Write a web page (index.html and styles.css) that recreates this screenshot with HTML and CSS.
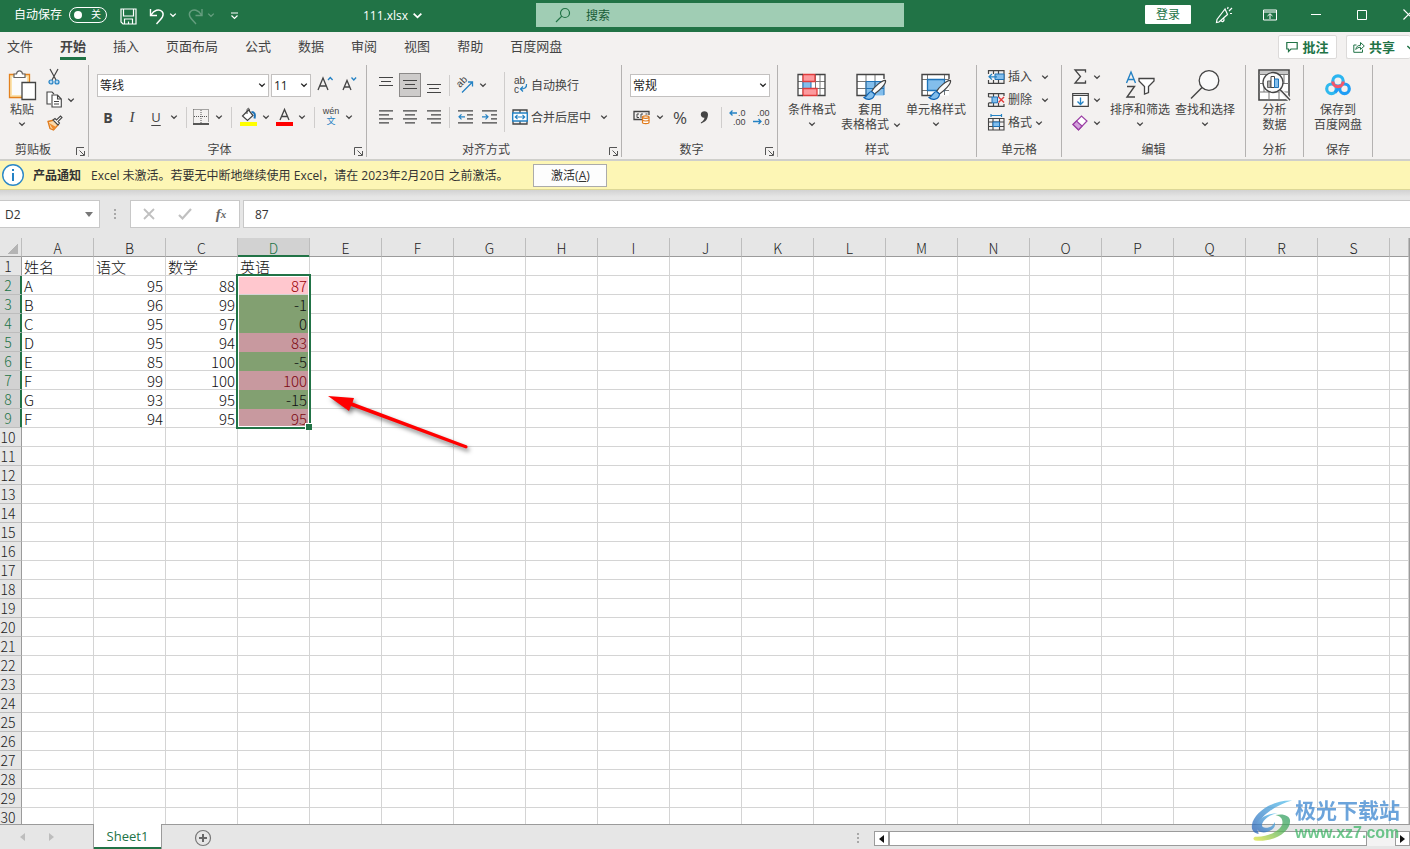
FILE: index.html
```html
<!DOCTYPE html>
<html lang="zh-CN">
<head>
<meta charset="utf-8">
<meta name="viewport" content="width=device-width, initial-scale=1">
<title>111.xlsx - Excel</title>
<link rel="stylesheet" href="styles.css">
</head>
<body>
<svg class="defs" aria-hidden="true">
  <symbol id="chev" viewBox="0 0 8 8"><path d="M1.2 2.6 4 5.3 6.8 2.6" fill="none" stroke="currentColor" stroke-width="1.3"/></symbol>
  <symbol id="launch" viewBox="0 0 9 9"><path d="M.5 8V.5H8M3.5 3.500 8 8M8.500 4V8.500H4" fill="none" stroke="#555"/></symbol>
  <symbol id="brush" viewBox="0 0 24 22"><path d="M22.500 1.500C19 1 11 8 8.500 12.500L11.500 15C16 12 23.500 5 22.500 1.500Z" fill="#fafafa" stroke="#444" stroke-width="1.200"/><path d="M8.500 12.500C5 12.500 5.500 17 1 18.500C4 21.500 11 21 11.500 15Z" fill="#83beec" stroke="#0f64b4" stroke-width="1.200"/></symbol>
</svg>

<header class="titlebar">
  <div class="title-left">
    <label class="autosave" for="autosave">自动保存</label>
    <span class="toggle"><input type="checkbox" id="autosave"><span>关</span></span>
    <button class="tb save" aria-label="保存"><svg width="17" height="17" viewBox="0 0 17 17" fill="none" stroke="#fff" stroke-width="1.200"><path d="M1 1H16V16H3L1 14ZM3.500 1V8H13.500V1M4.500 16V11H12.500V16M8.500 13.500V16"/></svg></button>
    <button class="tb undo" aria-label="撤销"><svg width="17" height="17" viewBox="0 0 17 17" fill="none" stroke="#fff" stroke-width="1.400"><path d="M1.500 1V7.500H8M2 7C5 2 10 .5 13 3.500C16 7 13 10 7.500 16"/></svg></button>
    <button class="tb mini" aria-label="撤销选项"><svg width="8" height="8"><use href="#chev"/></svg></button>
    <button class="tb redo faded" aria-label="恢复"><svg width="17" height="17" viewBox="0 0 17 17" fill="none" stroke="#fff" stroke-width="1.400"><path d="M15 1V7.500H8.500M14.500 7C11.500 2 6.500 .5 3.500 3.500C.5 7 3.500 10 9 16"/></svg></button>
    <button class="tb mini faded" aria-label="恢复选项"><svg width="8" height="8"><use href="#chev"/></svg></button>
    <button class="tb custom" aria-label="自定义快速访问工具栏"><svg width="9" height="8" viewBox="0 0 9 8" fill="none" stroke="#fff" stroke-width="1.200"><path d="M1 1H8M1.500 3.500 4.500 6.500 7.500 3.500"/></svg></button>
    <button class="doc-title">111.xlsx <svg width="11" height="11"><use href="#chev"/></svg></button>
  </div>
  <div class="search">
    <svg width="16" height="16" viewBox="0 0 16 16" fill="none" stroke="#217346" stroke-width="1.200"><circle cx="10" cy="6" r="4.500"/><path d="M6.800 9.200 1 15"/></svg>
    <input type="text" aria-label="搜索" placeholder="搜索">
  </div>
  <div class="title-right">
    <button class="login">登录</button>
    <button class="win" aria-label="即将推出的功能"><svg width="18" height="18" viewBox="0 0 18 18" fill="none" stroke="#fff" stroke-width="1.200"><path d="M10 3 2 13.500 1.500 16.500 4 16 12.500 8.500ZM6 14.500C7 16.500 9.500 15.500 9 12.500M10 3 12.500 8.500M12.500 3 13.200 1M14 5 17 2M15 7.500H17"/></svg></button>
    <button class="win" aria-label="功能区显示选项"><svg width="14" height="12" viewBox="0 0 14 12" fill="none" stroke="#fff"><path d="M.5 1H13.500V11H.5ZM.5 3H13.500M7 10V5M4.500 7 7 4.700 9.500 7"/></svg></button>
    <button class="win" aria-label="最小化"><svg width="10" height="11" viewBox="0 0 10 11"><path d="M0 5.500H10" stroke="#fff"/></svg></button>
    <button class="win" aria-label="最大化"><svg width="10" height="10" viewBox="0 0 10 10"><path d="M.5.5H9.500V9.500H.5Z" fill="none" stroke="#fff"/></svg></button>
    <button class="win last" aria-label="关闭"><svg width="11" height="11" viewBox="0 0 11 11"><path d="M.5.5 10.500 10.500M10.500.5.5 10.500" stroke="#fff" stroke-width="1.200"/></svg></button>
  </div>
</header>

<nav class="tabs">
  <button>文件</button><button class="active">开始</button><button>插入</button><button>页面布局</button><button>公式</button><button>数据</button><button>审阅</button><button>视图</button><button>帮助</button><button>百度网盘</button>
  <div class="tab-actions">
    <button class="pill"><svg width="12" height="12" viewBox="0 0 12 12" fill="none" stroke="#217346" stroke-width="1.200"><path d="M.8 1.500H11.200V8H5L2.500 10.500V8H.8Z"/></svg>批注</button>
    <button class="pill share"><svg width="12" height="12" viewBox="0 0 12 12" fill="none" stroke="#217346"><path d="M3.500 4H.8V11.300H9.500V8.500M2.800 8.500C3.200 5.500 5 4.300 7.500 4.300V1.500L11.300 5 7.500 8.500V6.300C5.500 6.300 4 7 2.800 8.500Z"/></svg>共享<svg class="share-chev" width="9" height="9"><use href="#chev"/></svg></button>
  </div>
</nav>

<section class="ribbon">
  <div class="group g-clip">
    <div class="body">
      <button class="big paste"><span class="pic"><svg width="30" height="32" viewBox="0 0 30 32"><path d="M2.500 5.500H22.500V28.500H2.500Z" fill="#fbe3ad" stroke="#e3811e" stroke-width="1.300"/><path d="M5 8H20V26H5Z" fill="#fbfbfb"/><path d="M7 8.500V5H9.500C10 .8 15 .8 15.500 5H18V8.500Z" fill="#fff" stroke="#666" stroke-width="1.200"/><path d="M15 13.500H28.500V30.500H15Z" fill="#fff" stroke="#444" stroke-width="1.300"/></svg></span><span>粘贴</span><svg class="ch" width="8" height="8"><use href="#chev"/></svg></button>
      <div class="stack">
        <button aria-label="剪切"><svg width="16" height="17" viewBox="0 0 16 17" fill="none" stroke-width="1.200"><path d="M4 1 10 12M12 1 6 12" stroke="#444"/><g stroke="#2482c4" fill="#b9daf2"><circle cx="5" cy="14" r="2"/><circle cx="11" cy="14" r="2"/></g></svg></button>
        <button aria-label="复制"><svg width="16" height="17" viewBox="0 0 16 17" fill="#fff" stroke="#444" stroke-width="1.100"><path d="M5 13H1V1H6L8 3"/><path d="M6 4H11.500L15.300 8V16H6ZM11.500 4V8H15.300M8 10.500H13M8 13H13"/></svg><svg class="far" width="8" height="8"><use href="#chev"/></svg></button>
        <button aria-label="格式刷"><svg width="17" height="16" viewBox="0 0 17 16"><path d="M2 6.500 8 5 12 10 7.500 15 4 13.500Z" fill="#fbd9a9" stroke="#e07a1a" stroke-width="1.300"/><path d="M3 8 10 12 7.500 15Z" fill="#ef8b2c"/><path d="M7 5 9 3.500 10.500 5 14.500 1 16 2.500 12 6.500 13.500 8 12 10Z" fill="#fff" stroke="#444" stroke-width="1.100"/></svg></button>
      </div>
    </div>
    <div class="foot"><span>剪贴板</span><button aria-label="剪贴板设置"><svg width="9" height="9"><use href="#launch"/></svg></button></div>
  </div>

  <div class="group g-font">
    <div class="body rows">
      <div class="row">
        <span class="combo font-name"><select aria-label="字体"><option>等线</option></select><svg width="8" height="8"><use href="#chev"/></svg></span>
        <span class="combo font-size"><select aria-label="字号"><option>11</option></select><svg width="8" height="8"><use href="#chev"/></svg></span>
        <button class="ic" aria-label="增大字号"><svg width="17" height="18" viewBox="0 0 17 18" fill="none"><path d="M1 14 6 2 11 14M2.700 10H9.300" stroke="#444" stroke-width="1.300"/><path d="M11 4 13.300 1.500 15.600 4" stroke="#2482c4" stroke-width="1.300"/></svg></button>
        <button class="ic" aria-label="减小字号"><svg width="17" height="18" viewBox="0 0 17 18" fill="none"><path d="M2 14 6 4.500 10 14M3.300 11H8.700" stroke="#444" stroke-width="1.300"/><path d="M10.500 1.500 12.800 4 15.100 1.500" stroke="#2482c4" stroke-width="1.300"/></svg></button>
      </div>
      <div class="row">
        <button class="ic bold" aria-label="加粗">B</button><button class="ic ital" aria-label="倾斜">I</button><button class="ic under" aria-label="下划线">U</button><button class="dd" aria-label="下划线选项"><svg width="8" height="8"><use href="#chev"/></svg></button>
        <i class="sep near"></i>
        <button class="ic" aria-label="边框"><svg width="16" height="16" viewBox="0 0 16 16"><path d="M.5.5H15.500V13M.5 .5V14M8 1V14M1 7.500H15" fill="none" stroke="#555" stroke-dasharray="1 1"/><path d="M0 15H16" stroke="#222" stroke-width="1.500"/></svg></button><button class="dd" aria-label="边框选项"><svg width="8" height="8"><use href="#chev"/></svg></button>
        <i class="sep wide"></i>
        <button class="ic" aria-label="填充颜色"><svg width="17" height="18" viewBox="0 0 17 18"><path d="M2.500 8 8.500 2 13 7.500 7.500 12.500Z" fill="#fff" stroke="#444" stroke-width="1.200"/><path d="M7 6V2.500C7-.5 10-.5 9.500 3" fill="none" stroke="#444"/><path d="M11.500 4C14.500 4 15.500 6 14.500 10.500" fill="none" stroke="#1e73b8" stroke-width="2"/><path d="M0 14H17V18H0Z" fill="#ff0"/></svg></button><button class="dd" aria-label="填充颜色选项"><svg width="8" height="8"><use href="#chev"/></svg></button>
        <button class="ic" aria-label="字体颜色"><svg width="17" height="18" viewBox="0 0 17 18"><path d="M4 12 8.500 1.500 13 12M5.500 8.500H11.500" fill="none" stroke="#444" stroke-width="1.300"/><path d="M0 14H17V18H0Z" fill="#f00"/></svg></button><button class="dd" aria-label="字体颜色选项"><svg width="8" height="8"><use href="#chev"/></svg></button>
        <i class="sep wide"></i>
        <button class="ic pinyin" aria-label="拼音"><span>wén</span><b>文</b></button><button class="dd" aria-label="拼音选项"><svg width="8" height="8"><use href="#chev"/></svg></button>
      </div>
    </div>
    <div class="foot"><span>字体</span><button aria-label="字体设置"><svg width="9" height="9"><use href="#launch"/></svg></button></div>
  </div>

  <div class="group g-align">
    <div class="body">
      <div class="rows">
        <div class="row">
          <button class="ic" aria-label="顶端对齐"><svg width="14" height="18" viewBox="0 0 14 18" stroke="#444" stroke-width="1.200"><path d="M0 1.500H14M2 5.500H12M0 9.500H14"/></svg></button><button class="ic on" aria-label="垂直居中"><svg width="14" height="18" viewBox="0 0 14 18" stroke="#444" stroke-width="1.200"><path d="M0 4.500H14M2 8.500H12M0 12.500H14"/></svg></button><button class="ic" aria-label="底端对齐"><svg width="14" height="18" viewBox="0 0 14 18" stroke="#444" stroke-width="1.200"><path d="M0 8.500H14M2 12.500H12M0 16.500H14"/></svg></button>
          <i class="sep"></i>
          <button class="ic" aria-label="方向"><svg width="18" height="18" viewBox="0 0 18 18" fill="none"><text class="glyph" x="4" y="12" transform="rotate(-45 4 12)">ab</text><path d="M6 16.500 16.500 6M12 6H16.500V10.500" stroke="#2482c4" stroke-width="1.300"/></svg></button><button class="dd" aria-label="方向选项"><svg width="8" height="8"><use href="#chev"/></svg></button>
        </div>
        <div class="row">
          <button class="ic" aria-label="左对齐"><svg width="14" height="14" viewBox="0 0 14 14" stroke="#444" stroke-width="1.200"><path d="M0 .8H14M0 4.800H10M0 8.800H14M0 12.800H10"/></svg></button><button class="ic" aria-label="居中"><svg width="14" height="14" viewBox="0 0 14 14" stroke="#444" stroke-width="1.200"><path d="M0 .8H14M2 4.800H12M0 8.800H14M2 12.800H12"/></svg></button><button class="ic" aria-label="右对齐"><svg width="14" height="14" viewBox="0 0 14 14" stroke="#444" stroke-width="1.200"><path d="M0 .8H14M4 4.800H14M0 8.800H14M4 12.800H14"/></svg></button>
          <i class="sep"></i>
          <button class="ic" aria-label="减少缩进"><svg width="15" height="14" viewBox="0 0 15 14" fill="none" stroke="#444" stroke-width="1.200"><path d="M0 .8H15M9 4.800H15M9 8.800H15M0 12.800H15"/><path d="M7 6.800H1M3.500 4.300 1 6.800 3.500 9.300" stroke="#2482c4"/></svg></button><button class="ic" aria-label="增加缩进"><svg width="15" height="14" viewBox="0 0 15 14" fill="none" stroke="#444" stroke-width="1.200"><path d="M0 .8H15M9 4.800H15M9 8.800H15M0 12.800H15"/><path d="M0 6.800H6M3.500 4.300 6 6.800 3.500 9.300" stroke="#2482c4"/></svg></button>
        </div>
      </div>
      <i class="sep tall"></i>
      <div class="rows wrap-rows">
        <div class="row"><button class="txt"><svg width="16" height="18" viewBox="0 0 16 18" fill="none"><text class="glyph" x="2" y="8">ab</text><text class="glyph" x="2" y="17">c</text><path d="M14.500 8C15 12 12 13 8.500 13M11 10.500 8.500 13 11 15.500" stroke="#2482c4" stroke-width="1.300"/></svg>自动换行</button></div>
        <div class="row"><button class="txt"><svg width="16" height="16" viewBox="0 0 16 16" fill="none"><path d="M1 1H15V15H1ZM8 1V4M8 12V15" stroke="#444" stroke-width="1.300"/><path d="M.7 4H15.300V12H.7Z" fill="#fff" stroke="#2482c4" stroke-width="1.400"/><path d="M3 8H13M5.500 5.800 3.300 8 5.500 10.200M10.500 5.800 12.700 8 10.500 10.200" stroke="#2482c4" stroke-width="1.200"/></svg>合并后居中</button><button class="dd merge-dd" aria-label="合并选项"><svg width="8" height="8"><use href="#chev"/></svg></button></div>
      </div>
    </div>
    <div class="foot"><span>对齐方式</span><button aria-label="对齐设置"><svg width="9" height="9"><use href="#launch"/></svg></button></div>
  </div>

  <div class="group g-num">
    <div class="body rows">
      <div class="row"><span class="combo num-format"><select aria-label="数字格式"><option>常规</option></select><svg width="8" height="8"><use href="#chev"/></svg></span></div>
      <div class="row">
        <button class="ic" aria-label="会计数字格式"><svg width="18" height="16" viewBox="0 0 18 16" fill="none"><path d="M9 10.500H1V2.500H16V6" stroke="#444" stroke-width="1.300"/><path d="M6 5H4V8.500H6M8 9V5H10M12.500 5H14.500" stroke="#444"/><path d="M9.500 8C9.500 6.500 16 6.500 16 8V13.500C16 15 9.500 15 9.500 13.500Z" fill="#fff" stroke="#e07a1a" stroke-width="1.200"/><path d="M9.500 8.300C10.500 9.600 15 9.600 16 8.300M9.500 11C10.500 12.300 15 12.300 16 11" stroke="#e07a1a" stroke-width="1.200"/></svg></button><button class="dd" aria-label="货币选项"><svg width="8" height="8"><use href="#chev"/></svg></button>
        <button class="ic pct" aria-label="百分比样式">%</button><button class="ic" aria-label="千位分隔样式"><svg width="9" height="14" viewBox="0 0 9 14"><path d="M8 4.500C8 9 5.500 12 1 13.500L.8 12.500C3 11.500 4.300 9.500 4.500 7.800 2.500 8.200 .8 6.500 .8 4.500 .8 .2 8 .2 8 4.500Z" fill="#444"/></svg></button>
        <i class="sep"></i>
        <button class="ic" aria-label="增加小数位数"><svg width="17" height="18" viewBox="0 0 17 18"><text class="glyph digits" x="9" y="8">.0</text><text class="glyph digits" x="4" y="17">.00</text><path d="M8 5H1M3.500 2.500 1 5 3.500 7.500" fill="none" stroke="#2482c4" stroke-width="1.300"/></svg></button><button class="ic" aria-label="减少小数位数"><svg width="17" height="18" viewBox="0 0 17 18"><text class="glyph digits" x="4" y="8">.00</text><text class="glyph digits" x="9" y="17">.0</text><path d="M0 13.500H8M5.500 11 8 13.500 5.500 16" fill="none" stroke="#2482c4" stroke-width="1.300"/></svg></button>
      </div>
    </div>
    <div class="foot"><span>数字</span><button aria-label="数字设置"><svg width="9" height="9"><use href="#launch"/></svg></button></div>
  </div>

  <div class="group g-style">
    <div class="body bigs">
      <button class="big"><span class="pic"><svg width="29" height="24" viewBox="0 0 29 24"><path d="M1 1.500H28V22.500H1Z" fill="#fff"/><path d="M1 8.500H28M1 15.500H28M6 1V22M18.500 1V22M23 1V22" stroke="#777"/><path d="M6 8.500H14V15.500H6Z" fill="#83beec" stroke="#1e73b8"/><path d="M6 1.500H18V8.500H6ZM6 15.500H20V22.500H6Z" fill="#fc9a9e" stroke="#e03c3c" stroke-width="1.300"/><path d="M6 1.500H1V22.500H6M18.500 1.500H28V22.500H20.500" fill="none" stroke="#444" stroke-width="1.300"/></svg></span><span>条件格式</span><svg class="ch" width="8" height="8"><use href="#chev"/></svg></button>
      <button class="big"><span class="pic"><svg width="32" height="30" viewBox="0 0 32 30"><path d="M2 4.500H29V25.500H2Z" fill="#fff"/><path d="M11 11.500H29V25.500H11Z" fill="#83beec"/><path d="M2 11.500H29M2 18.500H29M11 4V25M20 4V25" stroke="#777"/><path d="M11 25V11.500H29V25M11 18.500H29M20 11.500V25" fill="none" stroke="#1e73b8"/><path d="M12 25.500H2V4.500H29V9" fill="none" stroke="#444" stroke-width="1.400"/><use href="#brush" x="8" y="9" width="24" height="22"/></svg></span><span>套用</span><span class="with-ch">表格格式<svg width="8" height="8"><use href="#chev"/></svg></span></button>
      <button class="big"><span class="pic"><svg width="32" height="30" viewBox="0 0 32 30"><path d="M2 4.500H29V25.500H2Z" fill="#fff"/><path d="M7.500 4V25M2 9.500H29M2 20.500H29M24.500 4V25" stroke="#777"/><path d="M7.500 9.500H24.500V20.500H7.500Z" fill="#83beec" stroke="#1e73b8" stroke-width="1.300"/><path d="M12 25.500H2V4.500H29V9" fill="none" stroke="#444" stroke-width="1.400"/><use href="#brush" x="8" y="9" width="24" height="22"/></svg></span><span>单元格样式</span><svg class="ch" width="8" height="8"><use href="#chev"/></svg></button>
    </div>
    <div class="foot"><span>样式</span></div>
  </div>

  <div class="group g-cells">
    <div class="body stack">
      <button><svg width="17" height="14" viewBox="0 0 17 14" fill="none"><path d="M.5 4V.7H16V13.300H.5V10M5.500 .7V4M10.500 .7V13M5.500 10V13" stroke="#444" stroke-width="1.200"/><path d="M7 4H16V9.500H7Z" fill="#83beec" stroke="#1e73b8"/><path d="M9 6.800H1M4 4 1 6.800 4 9.600" stroke="#2482c4" stroke-width="1.200"/></svg>插入<svg class="far" width="8" height="8"><use href="#chev"/></svg></button>
      <button><svg width="17" height="14" viewBox="0 0 17 14" fill="none"><path d="M.5 4V.7H16V3M.5 10V13.300H16V11M5.500 .7V4M10.500 .7V4M5.500 10V13M10.500 10V13M.5 4H4M.5 9.800H4" stroke="#444" stroke-width="1.200"/><path d="M4 4H9.500V9.800H4Z" fill="#83beec" stroke="#1e73b8"/><path d="M10.500 4 16 9.500M16 4 10.500 9.500" stroke="#e23a3a" stroke-width="1.400"/></svg>删除<svg class="far" width="8" height="8"><use href="#chev"/></svg></button>
      <button><svg width="17" height="17" viewBox="0 0 17 17" fill="none"><path d="M.5 4.500H16V16H.5ZM.5 8H16M.5 12.500H16M5 4.500V16M11.500 4.500V16" stroke="#444" stroke-width="1.100"/><path d="M5 8H11.500V12.500H5Z" fill="#83beec" stroke="#1e73b8"/><path d="M3 1.500H13.500M3 0V3M13.500 0V3" stroke="#2482c4" stroke-width="1.200"/></svg>格式<svg width="8" height="8"><use href="#chev"/></svg></button>
    </div>
    <div class="foot"><span>单元格</span></div>
  </div>

  <div class="group g-edit">
    <div class="body">
      <div class="stack">
        <button aria-label="自动求和"><svg width="17" height="15" viewBox="0 0 17 15"><path d="M13.500 3.500V1H3L8.500 7.500 3 14H13.500V11.500" fill="none" stroke="#444" stroke-width="1.300"/></svg><svg width="8" height="8"><use href="#chev"/></svg></button>
        <button aria-label="填充"><svg width="17" height="14" viewBox="0 0 17 14" fill="none"><path d="M.7 .7H16.300V13.300H.7Z" fill="#fff" stroke="#444" stroke-width="1.200"/><path d="M.7 2.500H16.300" stroke="#444"/><path d="M8.500 4.500V11.500M5.500 8.500 8.500 11.500 11.500 8.500" stroke="#2482c4" stroke-width="1.300"/></svg><svg width="8" height="8"><use href="#chev"/></svg></button>
        <button aria-label="清除"><svg width="17" height="16" viewBox="0 0 17 16"><path d="M1 9.500 9.500 1 15 6 6.500 14.800Z" fill="#fff" stroke="#9b3fa5" stroke-width="1.200"/><path d="M1 9.500 4.500 6 10 11 6.500 14.800Z" fill="#d3a0dc" stroke="#9b3fa5" stroke-width="1.200"/></svg><svg width="8" height="8"><use href="#chev"/></svg></button>
      </div>
      <div class="bigs">
        <button class="big"><span class="pic"><svg width="30" height="28" viewBox="0 0 30 28" fill="none"><path d="M1.500 12 6 1 10.500 12M3 8.500H9" stroke="#2482c4" stroke-width="1.400"/><path d="M2 15.500H9.500L2 26H10" stroke="#444" stroke-width="1.400"/><path d="M14 7.500H29V10L23.500 15.500V21.500L19.500 23V15.500L14 10Z" fill="#fff" stroke="#444" stroke-width="1.300"/></svg></span><span>排序和筛选</span><svg class="ch" width="8" height="8"><use href="#chev"/></svg></button>
        <button class="big"><span class="pic"><svg width="30" height="30" viewBox="0 0 30 30"><circle cx="19" cy="10.500" r="9.800" fill="#fafafa" stroke="#444" stroke-width="1.300"/><path d="M12 17.500 1 28.500" stroke="#444" stroke-width="1.400"/></svg></span><span>查找和选择</span><svg class="ch" width="8" height="8"><use href="#chev"/></svg></button>
      </div>
    </div>
    <div class="foot"><span>编辑</span></div>
  </div>

  <div class="group g-analyze">
    <div class="body bigs">
      <button class="big"><span class="pic"><svg width="33" height="32" viewBox="0 0 33 32" fill="none"><path d="M1 1H31V31H1Z" fill="#fff" stroke="#444" stroke-width="1.600"/><path d="M2 2H30V5H2Z" fill="#c8c8c8"/><path d="M1 5.500H31M1 14.500H31M1 23H31M11 23V31M21 23V31M6 14V23M26 5V14" stroke="#777"/><circle cx="15" cy="13.500" r="10" fill="#fafafa" stroke="#444" stroke-width="1.300"/><path d="M9.500 12H13V18.500H9.500Z" fill="#aaa" stroke="#666"/><path d="M13 7.500H16.500V18.500H13Z" fill="#fff" stroke="#444"/><path d="M16.500 10H20.500V18.500H16.500Z" fill="#83beec" stroke="#1e73b8"/><path d="M23 22 32 31" stroke="#f3f1f0" stroke-width="4"/><path d="M22 20.500 32 31" stroke="#444" stroke-width="1.400"/></svg></span><span>分析</span><span>数据</span></button>
    </div>
    <div class="foot"><span>分析</span></div>
  </div>

  <div class="group g-save">
    <div class="body bigs">
      <button class="big"><span class="pic"><svg width="28" height="22" viewBox="0 0 28 22" fill="none" stroke-width="3.200"><circle cx="7.500" cy="14.800" r="4.800" stroke="#2fb9ee"/><circle cx="20.500" cy="14.800" r="4.800" stroke="#1f9df5"/><path d="M11 18.500 17 11.500" stroke="#1f9df5"/><circle cx="14" cy="7" r="5.200" stroke="#2bb5f0"/><path d="M8.800 7.500A5.200 5.200 0 0 0 19.200 7.500" stroke="#f5566b"/></svg></span><span>保存到</span><span>百度网盘</span></button>
    </div>
    <div class="foot"><span>保存</span></div>
  </div>
</section>

<section class="notice">
  <svg width="24" height="24" viewBox="0 0 24 24"><circle cx="12" cy="12" r="10.300" fill="#fff" stroke="#2b88c8" stroke-width="1.400"/><path d="M12 6V8M12 10V18" stroke="#2482c4" stroke-width="2"/></svg>
  <strong>产品通知</strong>
  <p>Excel 未激活。若要无中断地继续使用 Excel，请在 2023年2月20日 之前激活。</p>
  <button>激活(<u>A</u>)</button>
</section>

<section class="formula">
  <div class="namebox"><input type="text" aria-label="名称框" value="D2"><svg width="8" height="5" viewBox="0 0 8 5"><path d="M0 0H8L4 5Z" fill="#777"/></svg></div>
  <span class="dots"></span>
  <div class="fx">
    <button aria-label="取消"><svg width="12" height="12" viewBox="0 0 12 12"><path d="M1 1 11 11M11 1 1 11" stroke="#c0c0c0" stroke-width="1.800"/></svg></button>
    <button aria-label="输入"><svg width="14" height="12" viewBox="0 0 14 12"><path d="M1 7 4.500 10.500 13 1" fill="none" stroke="#c0c0c0" stroke-width="2.200"/></svg></button>
    <button class="fn" aria-label="插入函数">f<sub>x</sub></button>
  </div>
  <input class="fbar" type="text" aria-label="编辑栏" value="87">
</section>

<main class="sheet">
  <table id="grid"></table>
  <div class="selection"></div>
  <svg class="arrow" width="150" height="64" viewBox="0 0 150 64"><path d="M3 6 29 8 27.500 12.500 142 55.500Q143.500 58 141 58.500L26 16 24 21Z" fill="#f00"/></svg>
</main>

<footer class="bottom">
  <div class="nav-arrows">
    <button aria-label="上一张工作表"><svg width="5" height="8" viewBox="0 0 5 8"><path d="M5 0V8L0 4Z" fill="#bdbdbd"/></svg></button>
    <button aria-label="下一张工作表"><svg width="5" height="8" viewBox="0 0 5 8"><path d="M0 0V8L5 4Z" fill="#bdbdbd"/></svg></button>
  </div>
  <button class="sheet-tab">Sheet1</button>
  <button class="add" aria-label="新工作表"><svg width="18" height="18" viewBox="0 0 18 18"><circle cx="9" cy="9" r="7.500" fill="none" stroke="#777" stroke-width="1.200"/><path d="M9 5V13M5 9H13" stroke="#666" stroke-width="2"/></svg></button>
  <span class="dots"></span>
  <div class="scroll">
    <button aria-label="向左滚动"><svg width="5" height="8" viewBox="0 0 5 8"><path d="M5 0V8L0 4Z" fill="#111"/></svg></button>
    <span class="thumb"></span>
    <span class="track"></span>
    <button aria-label="向右滚动"><svg width="5" height="8" viewBox="0 0 5 8"><path d="M0 0V8L5 4Z" fill="#111"/></svg></button>
  </div>
</footer>

<div class="watermark">
  <svg width="45" height="44" viewBox="0 0 46 44">
    <defs><linearGradient id="wb" x1="0" y1="1" x2="1" y2="0"><stop offset="0" stop-color="#2a62b8"/><stop offset="1" stop-color="#58c4ee"/></linearGradient><linearGradient id="wg" x1="0" y1="1" x2="1" y2="0"><stop offset="0" stop-color="#e5e63c"/><stop offset=".6" stop-color="#4fb05a"/><stop offset="1" stop-color="#2f9c6a"/></linearGradient></defs>
    <path d="M43 2C24 1 4 14 2 27 1 33 5 36 9 36 5 29 10 20 20 13 27 8 35 4 43 2Z" fill="url(#wb)"/>
    <path d="M28 15C18 15 7 21 6 28 6 34 13 36 18 34 24 32 27 28 25 24 24 28 20 30 16 30 12 30 11 27 14 23 17 19 22 16 28 15Z" fill="url(#wb)"/>
    <path d="M26 17C33 15 41 17 41 23 41 34 25 45 5 43 3 42 3 40 5 39 18 40 31 33 33 26 34 21 31 18 26 17Z" fill="url(#wg)"/>
  </svg>
  <div><b>极光下载站</b><span>www.xz7.com</span></div>
</div>
<script src="grid.js"></script>
</body>
</html>
```

FILE: styles.css
```css
* { box-sizing: border-box; }
body {
  margin: 0;
  height: 100vh;
  display: flex;
  flex-direction: column;
  overflow: hidden;
  position: relative;
  background: #e6e6e6;
  color: #444;
  font: 12px/15px "Open Sans", "Noto Sans CJK SC", sans-serif;
}
button, input, select { font: inherit; color: inherit; margin: 0; }
button {
  display: flex;
  align-items: center;
  justify-content: center;
  padding: 0;
  border: 0;
  background: none;
  white-space: nowrap;
}
svg { display: block; flex: none; overflow: visible; }
.defs { position: absolute; width: 0; height: 0; }
.glyph { font: 10px "Liberation Sans", sans-serif; fill: #444; }
.digits { font-size: 9px; }

/* title bar */
.titlebar {
  flex: none;
  height: 32px;
  display: grid;
  grid-template-columns: 536fr 368fr 506fr;
  background: #217346;
  color: #fff;
}
.title-left { display: flex; align-items: center; padding: 0 113px 3px 14px; }
.toggle { display: grid; align-items: center; margin-left: 7px; }
.toggle > * { grid-area: 1 / 1; }
.toggle input {
  appearance: none;
  display: flex;
  align-items: center;
  width: 38px;
  height: 16px;
  padding-left: 4px;
  border: 1px solid #fff;
  border-radius: 8px;
}
.toggle input::before { content: ""; width: 8px; height: 8px; border-radius: 50%; background: #fff; }
.toggle span { justify-self: end; padding-right: 6px; font-size: 10px; pointer-events: none; }
.save { margin: 3px 0 0 13px; }
.undo { margin: 3px 0 0 12px; }
.redo { margin: 3px 0 0 10px; }
.mini { margin-left: 3px; }
.faded { opacity: .3; }
.custom { margin: 3px 0 0 15px; }
.doc-title { margin: 2px 0 0 auto; gap: 4px; }
.search {
  display: flex;
  align-items: center;
  align-self: start;
  height: 24px;
  margin-top: 3px;
  padding-left: 19px;
  gap: 15px;
  background: #a0cdb4;
}
.search input { flex: 1; min-width: 0; padding: 0; border: 0; outline: 0; background: none; }
.search input::placeholder { color: #185c37; opacity: 1; }
.title-right { display: flex; align-items: center; justify-content: flex-end; padding-bottom: 3px; overflow: hidden; }
.login { width: 46px; height: 19px; margin-right: 10px; background: #fff; color: #217346; border-radius: 1px; }
.win { width: 46px; height: 28px; flex: none; }
.win.last { margin-right: -21px; }

/* ribbon tabs */
.tabs {
  flex: none;
  height: 30px;
  display: flex;
  gap: 27px;
  padding-left: 7px;
  background: #f3f1f0;
  font-size: 13px;
}
.tabs > button { height: 28px; }
.tabs > .active { font-weight: bold; background: linear-gradient(#217346, #217346) 0 25px / 100% 3px no-repeat; }
.tab-actions { display: flex; gap: 9px; margin-left: auto; padding-top: 3px; }
.pill {
  width: 59px;
  height: 24px;
  gap: 4px;
  border: 1px solid #dcdad9;
  border-radius: 2px;
  background: #fff;
  color: #217346;
  font-weight: bold;
}
.share { width: 64px; padding-left: 6px; justify-content: flex-start; border-right: 0; overflow: hidden; }
.share-chev { margin-left: 7px; }

/* ribbon */
.ribbon {
  flex: none;
  display: flex;
  padding: 3px 0 2px;
  background: #f3f1f0;
  border-bottom: 2px solid #cfcfcb;
}
.group { flex: none; display: flex; flex-direction: column; height: 92px; border-right: 1px solid #b4b2b1; }
.g-clip { width: 89px; }
.g-font { width: 278px; }
.g-align { width: 255px; }
.g-num { width: 156px; }
.g-style { width: 199px; }
.g-cells { width: 85px; }
.g-edit { width: 184px; }
.g-analyze { width: 58px; }
.g-save { width: 69px; }
.body { flex: 1; display: flex; }
.foot { display: flex; height: 15px; align-items: center; }
.foot span { flex: 1; text-align: center; }
.foot button { width: 16px; padding-top: 4px; }
.g-clip .foot span { padding-right: 6px; }

.big { flex-direction: column; align-self: flex-start; }
.big > span { height: 15px; }
.big > .pic { display: flex; align-items: center; justify-content: center; height: 34px; margin-top: 3px; }
.big .ch { margin-top: 3px; }
.with-ch { display: flex; align-items: center; gap: 4px; }
.bigs { display: flex; justify-content: center; gap: 5px; }
.g-style .big:nth-child(2) > span:nth-child(2) { padding-right: 2px; }

.stack { display: flex; flex-direction: column; }
.stack button { height: 23px; gap: 3px; justify-content: flex-start; }
.stack .far { margin-left: 6px; }
.paste { width: 30px; margin-left: 7px; }
.g-clip .stack { margin-left: 9px; }
.g-clip .stack .far { margin-left: 2px; }
.g-cells .stack { padding-left: 11px; }
.g-edit .stack { padding-left: 10px; width: 48px; }
.g-edit .stack button { gap: 4px; }

.rows { display: flex; flex-direction: column; gap: 8px; padding-top: 8px; }
.g-font .rows { padding-left: 7px; }
.g-num .rows { padding-left: 8px; }
.g-align .body { padding-left: 7px; }
.row { display: flex; align-items: center; height: 24px; }
.ic { width: 24px; height: 24px; flex: none; }
.on { width: 22px; margin: 0 1px; background: #cdcbca; border: 1px solid #8c8a89; }
.dd { width: 12px; height: 24px; flex: none; }
.sep { flex: none; width: 1px; height: 21px; margin: 0 3px; background: #cfcdcc; }
.sep.near { margin: 0 2px 0 6px; }
.sep.wide { margin: 0 4px 0 6px; }
.sep.tall { height: 60px; margin-top: 7px; }
.combo { display: grid; align-items: center; height: 23px; background: #fff; border: 1px solid #c3c1c0; color: #222; }
.combo > * { grid-area: 1 / 1; }
.combo select { appearance: none; width: 100%; height: 21px; padding: 0 2px; border: 0; background: none; }
.combo svg { justify-self: end; margin-right: 2px; pointer-events: none; }
.font-name { width: 172px; margin-left: 1px; }
.font-size { width: 40px; margin: 0 2px; }
.num-format { width: 140px; }
.bold { font-size: 14px; font-weight: bold; }
.ital { font: italic 15px "Liberation Serif", serif; }
.under { font-size: 13px; text-decoration: underline; text-underline-offset: 3px; }
.pinyin { flex-direction: column; font: 9px/9px "Liberation Sans", "Noto Sans CJK SC", sans-serif; }
.pinyin b { font-weight: normal; color: #2482c4; line-height: 11px; }
.pct { font-size: 17px; margin-left: 2px; }
.pct + .ic { margin-right: 2px; }
.wrap-rows { padding-left: 4px; }
.txt { gap: 3px; }
.merge-dd { margin-left: 7px; }

/* activation notice */
.notice {
  flex: none;
  display: flex;
  align-items: center;
  height: 29px;
  padding-left: 1px;
  background: #fdf6b5;
  border-bottom: 1px solid #dcd797;
  color: #333;
}
.notice strong { margin: 0 10px 0 8px; }
.notice p { margin: 0 25px 0 0; white-space: nowrap; }
.notice button { width: 74px; height: 23px; border: 1px solid #ababab; background: #fdfdfd; }

/* formula bar */
.formula {
  flex: none;
  display: flex;
  height: 48px;
  padding: 10px 0;
  background: linear-gradient(#d2d2d2, #e6e6e6 7px);
  color: #333;
}
.formula > * { height: 28px; border: 1px solid #c8c8c8; background: #fff; }
.namebox { display: flex; align-items: center; width: 100px; border-left: 0; }
.namebox input { flex: 1; min-width: 0; padding: 0 0 0 5px; border: 0; outline: 0; }
.namebox svg { margin-right: 6px; }
.dots { width: 2px; height: 11px; background: repeating-linear-gradient(#a8a8a8 0 2px, transparent 2px 4px); }
.formula .dots { margin: 9px 14px 0; height: 10px; border: 0; background: repeating-linear-gradient(#a8a8a8 0 2px, transparent 2px 4px); }
.fx { display: flex; width: 110px; margin-right: 3px; }
.fx button { flex: 1; }
.fx .fn { font: italic bold 15px "Liberation Serif", serif; color: #666; }
.fn sub { font-size: 11px; line-height: 10px; }
.fbar { flex: 1; min-width: 0; padding: 0 11px; border-right: 0; outline: 0; }

/* grid */
.sheet {
  flex: 1;
  min-height: 0;
  position: relative;
  overflow: hidden;
  border-right: 1px solid #9b9b9b;
  background: #fff;
}
#grid {
  table-layout: fixed;
  width: 100%;
  border-spacing: 0;
  color: #111;
  font: 300 15px/17px "Noto Sans CJK SC Light", "Noto Sans CJK SC", sans-serif;
}
#grid th, #grid td { height: 19px; padding: 1px 2px 0; white-space: nowrap; border: solid #d4d4d4; border-width: 0 1px 1px 0; }
#grid th { padding: 1px 0 0; font-weight: inherit; background: #e6e6e6; text-align: center; color: #222; border-color: #bdbdbd; }
#grid thead th { padding-top: 2px; line-height: 16px; border-bottom-color: #9b9b9b; font-size: 14px; }
#grid tbody th { padding-right: 5px; border-right-color: #9b9b9b; font-size: 14px; }
#grid thead th:first-child { background: linear-gradient(135deg, #e6e6e6 50%, #b4b4b4 50%) 7px 5px / 11px 11px no-repeat #e6e6e6; }
#grid .corner { width: 22px; }
#grid .col { width: 72px; }
#grid .rest { width: auto; }
#grid th.sel { background: #d2d2d2; color: #217346; }
#grid thead th.sel { border-bottom-color: #217346; box-shadow: inset 0 -1px #217346; }
#grid tbody th.sel { border-right-color: #217346; box-shadow: inset -1px 0 #217346; }
#grid .n { text-align: right; }
#grid .hot { background: #ffc7ce; color: #9c0006; }
#grid .rose { background: #c8999f; color: #7d0a12; border-color: #c8999f; }
#grid .green { background: #82a071; border-color: #82a071; }
.selection {
  position: absolute;
  left: 236px;
  top: 36px;
  width: 75px;
  height: 155px;
  border: 2px solid #217346;
  box-shadow: inset 0 0 0 1px #fff;
}
.selection::after {
  content: "";
  position: absolute;
  right: -3px;
  bottom: -3px;
  width: 6px;
  height: 6px;
  background: #217346;
  border: solid #fff;
  border-width: 1px 0 0 1px;
}
.arrow { position: absolute; left: 325px; top: 152px; filter: drop-shadow(2px 3px 2px rgba(0, 0, 0, .5)); }

/* sheet tabs and scroll bar */
.bottom { flex: none; display: flex; align-items: center; height: 25px; border-top: 1px solid #9b9b9b; }
.nav-arrows { display: flex; width: 93px; gap: 24px; padding-left: 20px; }
.sheet-tab {
  width: 69px;
  height: 25px;
  margin-top: -1px;
  background: #fff;
  border: solid #9b9b9b;
  border-width: 0 1px;
  box-shadow: inset 0 -2px #217346;
  color: #217346;
  font-size: 13px;
}
.add { margin: 2px 0 0 32px; }
.bottom .dots { margin: 3px 15px 0 auto; }
.scroll { display: flex; width: 38%; height: 15px; margin-top: 3px; }
.scroll button { width: 15px; border: 1px solid #9b9b9b; background: #fff; }
.thumb { border: 1px solid #9b9b9b; background: #fff; flex: 479; }
.track { flex: 28; background: #f3f3f3; }

/* site mark */
.watermark {
  position: absolute;
  right: 10px;
  bottom: 7px;
  display: flex;
  align-items: center;
  opacity: .75;
  pointer-events: none;
}
.watermark div { display: flex; flex-direction: column; }
.watermark b { color: #3b86cf; font-size: 21px; line-height: 25px; }
.watermark span { color: #3fb568; font: bold 16px/19px "Liberation Sans", sans-serif; }
```

FILE: grid.js
```js
const columns = "ABCDEFGHIJKLMNOPQRS".split("").concat("");
const data = [
  ["姓名", "语文", "数学", "英语"],
  ["A", 95, 88, 87],
  ["B", 96, 99, -1],
  ["C", 95, 97, 0],
  ["D", 95, 94, 83],
  ["E", 85, 100, -5],
  ["F", 99, 100, 100],
  ["G", 93, 95, -15],
  ["F", 94, 95, 95]
];

function shade(row, col, value) {
  if (col !== 3 || row === 0 || value === undefined) return "";
  if (row === 1) return " hot";
  return value > 0 ? " rose" : " green";
}

let html = "<thead><tr><th class='corner'></th>";
columns.forEach(c => { html += `<th class="${c ? "col" : "rest"}${c === "D" ? " sel" : ""}">${c}</th>`; });
html += "</tr></thead><tbody>";
for (let r = 0; r < 30; r++) {
  html += `<tr><th class="${r >= 1 && r <= 8 ? "sel" : ""}">${r + 1}</th>`;
  columns.forEach((_, c) => {
    const v = data[r] ? data[r][c] : undefined;
    const cls = (typeof v === "number" ? "n" : "") + shade(r, c, v);
    html += `<td class="${cls}">${v === undefined ? "" : v}</td>`;
  });
  html += "</tr>";
}
document.getElementById("grid").innerHTML = html + "</tbody>";
```
